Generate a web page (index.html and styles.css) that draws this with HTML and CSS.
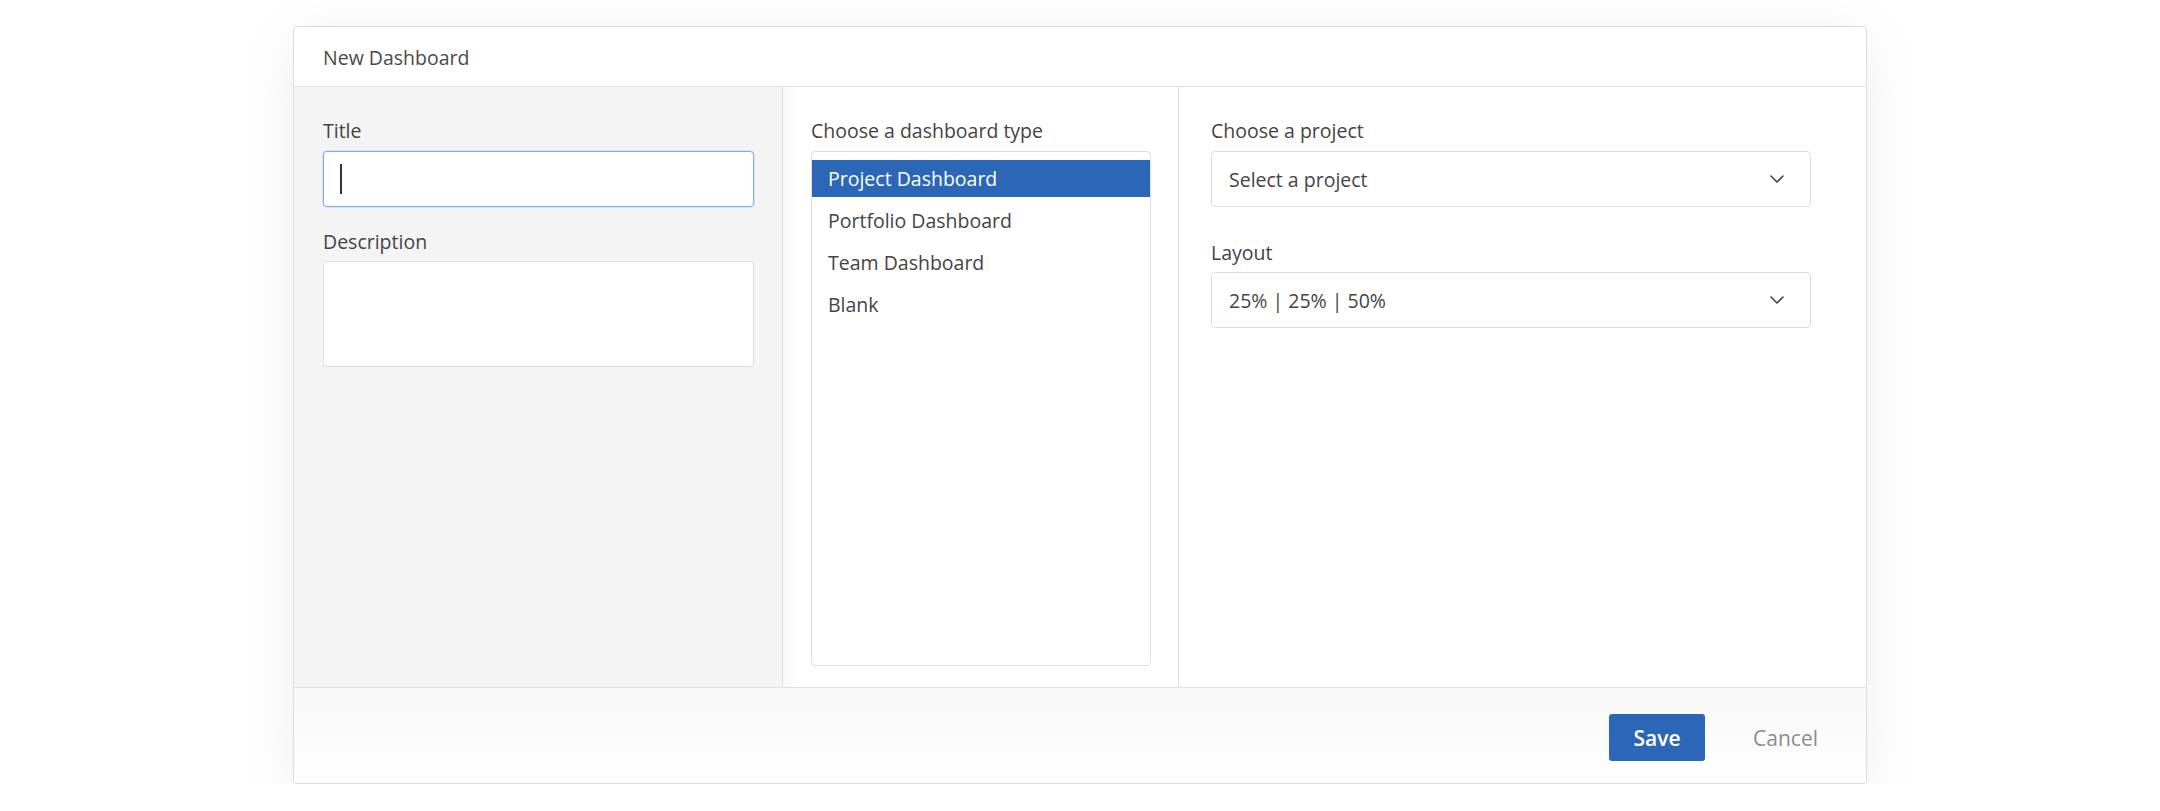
FILE: index.html
```html
<!DOCTYPE html>
<html lang="en">
<head>
<meta charset="utf-8">
<title>New Dashboard</title>
<link rel="stylesheet" href="styles.css">
</head>
<body>
<div class="dialog">
  <div class="dialog-header">New Dashboard</div>
  <div class="dialog-body">
    <div class="col col-left">
      <label class="label">Title</label>
      <div class="field field-focus"><span class="caret"></span></div>
      <label class="label label-gap">Description</label>
      <div class="field textarea"></div>
    </div>
    <div class="col col-mid">
      <label class="label">Choose a dashboard type</label>
      <div class="listbox">
        <div class="option selected">Project Dashboard</div>
        <div class="option">Portfolio Dashboard</div>
        <div class="option">Team Dashboard</div>
        <div class="option">Blank</div>
      </div>
    </div>
    <div class="col col-right">
      <label class="label">Choose a project</label>
      <div class="field select">
        <span>Select a project</span>
        <svg class="chev" width="14" height="8" viewBox="0 0 14 8"><path d="M1 1 L7 7 L13 1" fill="none" stroke="#444" stroke-width="1.6" stroke-linecap="round" stroke-linejoin="round"/></svg>
      </div>
      <label class="label label-gap2">Layout</label>
      <div class="field select">
        <span>25% | 25% | 50%</span>
        <svg class="chev" width="14" height="8" viewBox="0 0 14 8"><path d="M1 1 L7 7 L13 1" fill="none" stroke="#444" stroke-width="1.6" stroke-linecap="round" stroke-linejoin="round"/></svg>
      </div>
    </div>
  </div>
  <div class="dialog-footer">
    <button class="btn btn-primary">Save</button>
    <button class="btn btn-link">Cancel</button>
  </div>
</div>
</body>
</html>
```

FILE: styles.css
```css
* { box-sizing: border-box; }
html, body { margin: 0; padding: 0; background: #fff; }
body {
  font-family: "Open Sans", "Noto Sans", sans-serif;
  color: #444;
  font-size: 19.5px;
}
.dialog {
  margin: 26px 0 0 293px;
  width: 1574px;
  height: 758px;
  border: 1px solid #dcdcdc;
  border-radius: 3px;
  background: #fff;
  display: flex;
  flex-direction: column;
  box-shadow: 0 10px 60px rgba(0,0,0,0.07);
}
.dialog-header {
  height: 60px;
  flex: none;
  border-bottom: 1px solid #e0e0e0;
  padding-left: 29px;
  display: flex;
  align-items: center;
  font-size: 19.5px;
  line-height: 27px;
  color: #4a4a4a;
  padding-top: 1px;
}
.dialog-body {
  flex: 1;
  display: flex;
  min-height: 0;
}
.col {
  display: flex;
  flex-direction: column;
  padding-top: 30px;
}
.col-left {
  width: 489px;
  background: #f4f4f4;
  border-right: 1px solid #dedede;
  padding-left: 29px;
  padding-right: 28px;
}
.col-mid {
  width: 396px;
  border-right: 1px solid #dedede;
  padding-left: 28px;
  padding-right: 27px;
  padding-bottom: 21px;
  box-shadow: inset 16px 0 20px -14px rgba(0,0,0,0.05);
}
.col-right {
  flex: 1;
  padding-left: 32px;
  padding-right: 55px;
}
.label {
  display: block;
  font-size: 19.5px;
  line-height: 27px;
  margin-bottom: 7px;
  color: #444;
}
.label-gap { margin-top: 21px; margin-bottom: 6px; }
.label-gap2 { margin-top: 32px; margin-bottom: 6px; }
.field {
  height: 56px;
  border: 1px solid #dedede;
  border-radius: 4px;
  background: #fff;
  flex: none;
}
.field-focus {
  border-color: #7dafef;
  box-shadow: 0 0 0 1px rgba(125,175,239,0.25);
  display: flex;
  align-items: center;
  padding-left: 16px;
}
.caret {
  display: block;
  width: 1.5px;
  height: 30px;
  background: #333;
}
.textarea { height: 106px; }
.listbox {
  flex: 1;
  border: 1px solid #dedede;
  border-radius: 4px;
  background: #fff;
  padding-top: 8px;
}
.option {
  height: 37px;
  line-height: 37px;
  padding-left: 16px;
  margin-bottom: 5px;
  font-size: 19.5px;
  color: #444;
}
.option.selected {
  background: #2c67b7;
  color: #fff;
}
.select {
  display: flex;
  align-items: center;
  justify-content: space-between;
  padding-left: 17px;
  padding-right: 26px;
  font-size: 19.5px;
  color: #444;
}
.select span { line-height: 27px; margin-top: 1px; }
.chev { display: block; }
.dialog-footer {
  height: 96px;
  flex: none;
  border-top: 1px solid #e2e2e2;
  background: linear-gradient(#f8f8f8, #fefefe);
  display: flex;
  justify-content: flex-end;
  align-items: flex-start;
  padding-top: 26px;
  padding-right: 24px;
  gap: 24px;
}
.btn {
  font-family: "Open Sans", "Noto Sans", sans-serif;
  font-size: 21px;
  height: 47px;
  padding: 0 24px;
  border: none;
  border-radius: 3px;
  background: none;
  cursor: pointer;
}
.btn-primary {
  background: #2c67b7;
  color: #fff;
  font-weight: 600;
  width: 96px;
  padding: 0;
}
.btn-link {
  color: #8c8c8c;
  font-weight: 400;
}
```
